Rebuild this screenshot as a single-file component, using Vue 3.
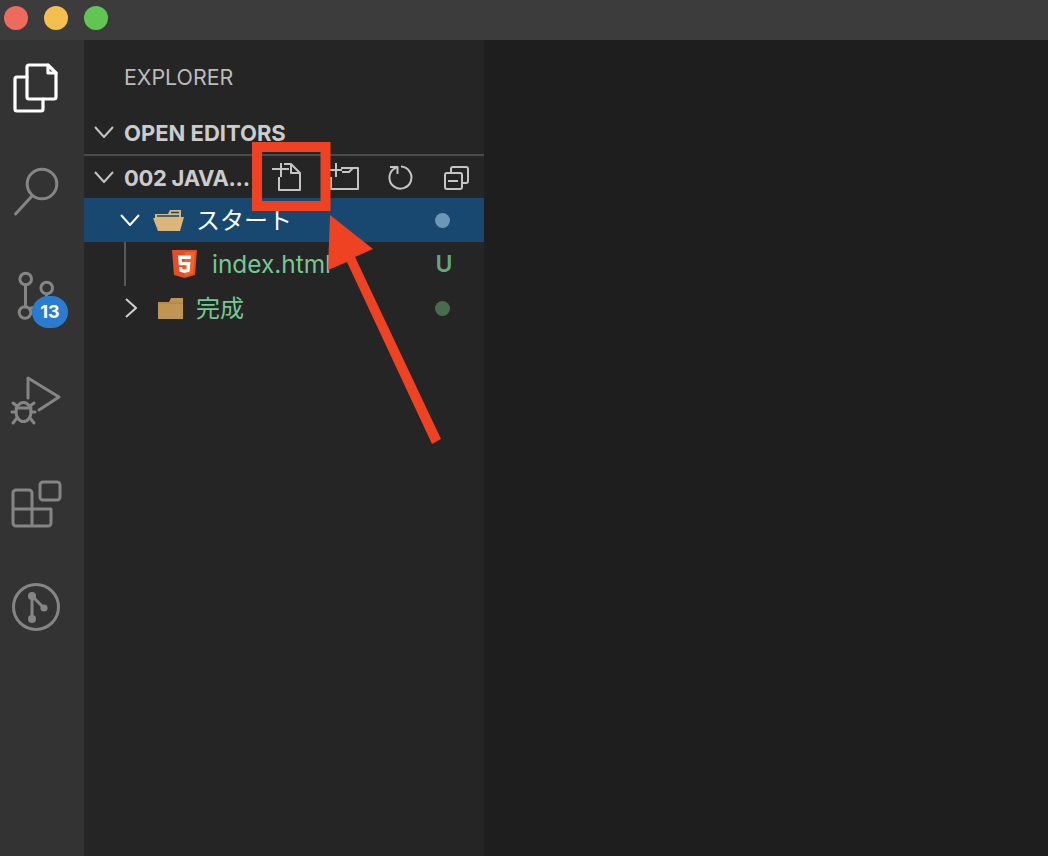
<script setup>
const sideIcons = ['files', 'search', 'scm', 'debug', 'ext', 'git']
const actions = ['newFile', 'newFolder', 'refresh', 'collapse']
</script>

<template>
  <div class="window">
    <header class="titlebar">
      <span class="light red"></span>
      <span class="light yellow"></span>
      <span class="light green"></span>
    </header>
    <div class="body">
      <nav class="activity">
        <div v-for="name in sideIcons" :key="name" class="activity-item">
          <svg class="act-icon" :class="{ active: name === 'files' }" width="64" height="64" viewBox="0 0 64 64" fill="none">
            <template v-if="name === 'files'">
              <path d="M17 21H7a2 2 0 0 0-2 2v30a2 2 0 0 0 2 2h24a2 2 0 0 0 2-2V43" />
              <path d="M19 9h19l8 8v24a2 2 0 0 1-2 2H19a2 2 0 0 1-2-2V11a2 2 0 0 1 2-2z" />
              <path d="M38 9v8h8" />
            </template>
            <template v-else-if="name === 'search'">
              <circle cx="32" cy="24" r="14.800" />
              <path d="M5.500 54L22 36" />
            </template>
            <template v-else-if="name === 'scm'">
              <circle cx="15.700" cy="15" r="5.800" />
              <circle cx="36.700" cy="24" r="5.800" />
              <circle cx="15" cy="48.500" r="5.800" />
              <path d="M15.500 21v22M21 44c8-1 15-3 15.500-14" />
            </template>
            <template v-else-if="name === 'debug'">
              <path d="M18 30V10l31 19-20 13" />
              <ellipse cx="13.500" cy="44" rx="7.500" ry="9.500" />
              <path d="M6 40h15M2 44h4M21 44h4M3 35l4 3M24 35l-4 3M3 55l4-5M24 55l-4-5" />
            </template>
            <template v-else-if="name === 'ext'">
              <rect x="30" y="10" width="20" height="18" rx="3" />
              <path d="M22 37V21a3 3 0 0 0-3-3H6a3 3 0 0 0-3 3v30a3 3 0 0 0 3 3h32a3 3 0 0 0 3-3V37H3M22 37v17" />
            </template>
            <template v-else>
              <circle cx="26" cy="31" r="22.500" />
              <path d="M22 20v23M22 20l12 12" />
              <circle class="dot" cx="22" cy="20" r="4" />
              <circle class="dot" cx="34" cy="32" r="3.600" />
              <circle class="dot" cx="22" cy="43" r="4" />
            </template>
          </svg>
          <span v-if="name === 'scm'" class="badge">13</span>
        </div>
      </nav>

      <aside class="sidebar">
        <div class="sidebar-title">EXPLORER</div>
        <div class="section open-editors">
          <svg class="chev" width="20" height="12" viewBox="0 0 20 12" fill="none"><path d="M1 1l9 10 9-10" /></svg>
          <span class="section-name">OPEN EDITORS</span>
        </div>
        <div class="section project">
          <svg class="chev" width="20" height="12" viewBox="0 0 20 12" fill="none"><path d="M1 1l9 10 9-10" /></svg>
          <span class="section-name short">002 JAVA...</span>
          <div class="actions">
            <div v-for="a in actions" :key="a" class="action">
              <svg class="tool" width="40" height="40" viewBox="0 0 40 40" fill="none">
                <template v-if="a === 'newFile'">
                  <path d="M4 12h17M13 6v14M16 7h7l9 9v17H11V20" />
                  <path d="M23 7v9h9" />
                </template>
                <template v-else-if="a === 'newFolder'">
                  <path d="M7 20v12h27V11H17M6 13h12M12 6v14M18 15h7l4-4" />
                </template>
                <template v-else-if="a === 'refresh'">
                  <path d="M21 9.600A11 11 0 1 1 13 12.500L17.500 10" />
                  <path d="M10 10h7.500v7" />
                </template>
                <template v-else>
                  <rect x="9" y="16" width="17" height="16" rx="2" />
                  <path d="M15 16v-4a2 2 0 0 1 2-2h13a2 2 0 0 1 2 2v12a2 2 0 0 1-2 2h-4M12 24h10" />
                </template>
              </svg>
            </div>
          </div>
        </div>

        <div class="row selected">
          <svg class="twistie down" width="20" height="12" viewBox="0 0 20 12" fill="none"><path d="M1 1l9 10 9-10" /></svg>
          <svg class="folder-open" width="31" height="21" viewBox="0 0 31 21">
            <path d="M2 4h13l2-4h11v10H2z" fill="#dcb67a" />
            <path d="M4 6h22M18 2.500h8" stroke="#18476f" stroke-width="1.600" fill="none" />
            <path d="M0 8h12l2-1h17l-4 14H5z" fill="#dcb67a" />
          </svg>
          <span class="label start">スタート</span>
          <span class="deco"><i class="dot-mark blue"></i></span>
        </div>

        <div class="row file">
          <span class="guide"></span>
          <svg class="html5" width="25" height="28" viewBox="0 0 25 28">
            <path d="M0 0h25l-2 25-10.500 3L2 25z" fill="#e44d26" />
            <path d="M12.500 2v24l8.500-2.500L23 2z" fill="#f16529" />
            <path d="M6 5.500h13L18.700 9h-9l.3 3h8.400l-.8 9.500-5.100 1.500-5.100-1.500L7 17h3.300l.2 2 2 .6 2-.6.3-3.700h-8z" fill="#fff" />
          </svg>
          <span class="label html">index.html</span>
          <span class="deco letter">U</span>
        </div>

        <div class="row">
          <svg class="twistie right" width="12" height="20" viewBox="0 0 12 20" fill="none"><path d="M1 1l10 9-10 9" /></svg>
          <svg class="folder" width="25" height="21" viewBox="0 0 25 21">
            <path d="M0 21V4h11l2-4h12v21z" fill="#c09553" />
            <path d="M1 5h24" stroke="#a8823f" stroke-width="1" />
          </svg>
          <span class="label done">完成</span>
          <span class="deco"><i class="dot-mark greenish"></i></span>
        </div>
      </aside>

      <main class="editor"></main>
    </div>

    <svg class="annotation" width="1048" height="856" viewBox="0 0 1048 856">
      <rect x="257" y="147" width="68.500" height="59" fill="none" stroke="#ee4223" stroke-width="10" />
      <path d="M330 215L373 249L355 257L441 439L432 444L347 262L328 270z" fill="#ee4223" />
    </svg>
  </div>
</template>

<style>
html, body { margin: 0; background: #1e1e1e; }
</style>

<style scoped>
.window {
  position: relative;
  width: 1048px;
  height: 856px;
  overflow: hidden;
  display: flex;
  flex-direction: column;
  font-family: Inter, "Noto Sans CJK JP", sans-serif;
  background: #1e1e1e;
}
.titlebar {
  height: 40px;
  flex: none;
  background: #3c3c3c;
  display: flex;
  align-items: center;
  gap: 16px;
  padding: 0 0 4px 4px;
  box-sizing: border-box;
}
.light { width: 24px; height: 24px; border-radius: 50%; }
.red { background: #ed6a5e; }
.yellow { background: #f4bf4f; }
.green { background: #61c554; }

.body { flex: 1; display: flex; min-height: 0; }

.activity {
  width: 84px;
  flex: none;
  background: #333333;
  display: flex;
  flex-direction: column;
  gap: 8px;
}
.activity-item {
  position: relative;
  height: 96px;
  display: flex;
  align-items: center;
  padding-left: 10px;
}
.act-icon { stroke: #858585; stroke-width: 3; stroke-linecap: round; stroke-linejoin: round; }
.act-icon.active { stroke: #ffffff; stroke-width: 3.200; }
.act-icon .dot { fill: #858585; stroke: none; }
.badge {
  position: absolute;
  left: 32px;
  top: 48px;
  width: 36px;
  height: 32px;
  border-radius: 16px;
  background: #2a7cd0;
  color: #fff;
  font-size: 18px;
  font-weight: 700;
  line-height: 32px;
  text-align: center;
}

.sidebar {
  width: 400px;
  flex: none;
  background: #252526;
  display: flex;
  flex-direction: column;
}
.sidebar-title {
  height: 70px;
  padding-left: 40px;
  line-height: 74px;
  font-size: 21.400px;
  color: #bbbbbb;
}
.section {
  display: flex;
  align-items: center;
  color: #cccccc;
}
.open-editors {
  height: 44px;
  border-bottom: 2px solid #4a4a4a;
}
.project { height: 42px; }
.chev { margin: 0 10px; flex: none; stroke: #c5c5c5; stroke-width: 2; }
.section-name { font-size: 22px; font-weight: 700; white-space: nowrap; padding-top: 2px; }
.short { letter-spacing: -0.300px; }
.actions { margin-left: auto; display: flex; }
.action { width: 56px; height: 42px; display: flex; align-items: center; justify-content: center; }
.tool { stroke: #c5c5c5; stroke-width: 2; stroke-linejoin: round; }

.row {
  position: relative;
  height: 44px;
  display: flex;
  align-items: center;
  color: #ccc;
}
.row.selected { background: #18476f; }
.twistie { flex: none; stroke: #d0d0d0; stroke-width: 2; }
.twistie.down { margin-left: 36px; stroke: #fff; }
.twistie.right { margin-left: 41px; }
.folder-open { margin-left: 13px; flex: none; }
.folder { margin-left: 21px; flex: none; }
.html5 { margin-left: 88px; flex: none; }
.guide {
  position: absolute;
  left: 40px;
  top: 0;
  bottom: 0;
  width: 2px;
  background: #585858;
}
.label { font-size: 24px; white-space: nowrap; }
.start { margin-left: 12px; color: #ffffff; padding-bottom: 3px; }
.html { margin-left: 15px; color: #73c991; font-size: 24.400px; }
.done { margin-left: 13px; color: #73c991; padding-bottom: 3px; }
.deco {
  position: absolute;
  left: 343px;
  top: 0;
  width: 30px;
  height: 44px;
  display: flex;
  align-items: center;
  justify-content: center;
}
.letter { color: #5fa97d; font-size: 23px; font-weight: 600; left: 345px; }
.dot-mark { width: 15px; height: 15px; border-radius: 50%; display: block; }
.blue { background: #6c97b7; }
.greenish { background: #4a6b50; }

.editor { flex: 1; background: #1e1e1e; }

.annotation { position: absolute; left: 0; top: 0; pointer-events: none; }
</style>
